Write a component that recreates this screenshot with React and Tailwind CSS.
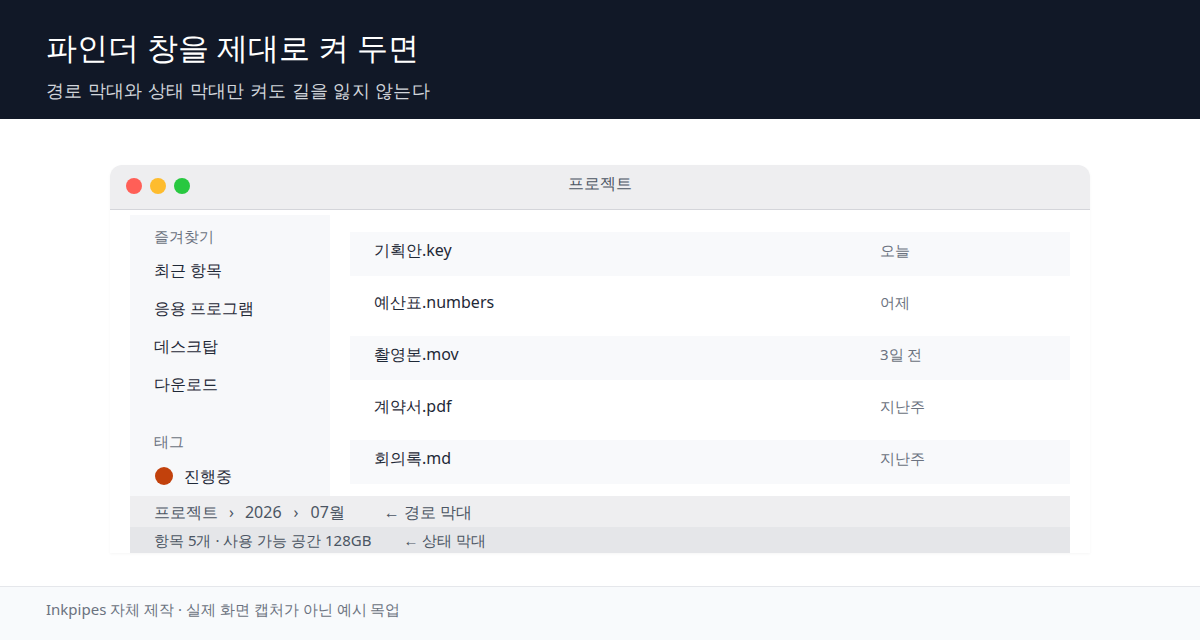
const FAVORITES = ['최근 항목', '응용 프로그램', '데스크탑', '다운로드']

const FILES = [
  { name: '기획안.key', date: '오늘' },
  { name: '예산표.numbers', date: '어제' },
  { name: '촬영본.mov', date: '3일 전' },
  { name: '계약서.pdf', date: '지난주' },
  { name: '회의록.md', date: '지난주' },
]

function Sidebar() {
  return (
    <div className="w-[200px] shrink-0 bg-[#f7f8fa] pt-[11px] pl-[24px]">
      <div className="text-[15px] leading-[20px] text-[#6b7280]">즐겨찾기</div>
      <div className="mt-[5px]">
        {FAVORITES.map(f => (
          <div key={f} className="h-[38px] flex items-center text-[16px] text-[#1f2937]">{f}</div>
        ))}
      </div>
      <div className="mt-[28px] text-[15px] leading-[20px] text-[#6b7280]">태그</div>
      <div className="mt-[6px] h-[38px] flex items-center text-[16px] text-[#1f2937]">
        <span className="w-[18px] h-[18px] ml-[1px] rounded-full bg-[#c2410c] shrink-0" />
        <span className="ml-[11px]">진행중</span>
      </div>
    </div>
  )
}

function FileList() {
  return (
    <div className="flex-1 pl-[20px] pt-[17px] flex flex-col gap-[8px]">
      {FILES.map((f, i) => (
        <div key={f.name} className={`h-[44px] pb-[8px] flex items-center ${i % 2 === 0 ? 'bg-[#f8f9fb]' : 'bg-white'}`}>
          <span className="w-[506px] ml-[24px] text-[16px] text-[#1f2937]">{f.name}</span>
          <span className="text-[15px] text-[#6b7280]">{f.date}</span>
        </div>
      ))}
    </div>
  )
}

export default function App() {
  return (
    <div className="w-[1200px] h-[640px] flex flex-col bg-white overflow-hidden font-['Noto_Sans',sans-serif]">
      <header className="h-[119px] shrink-0 bg-[#111827] px-[46px] pt-[27px]">
        <h1 className="text-[31px] leading-[40px] text-white">파인더 창을 제대로 켜 두면</h1>
        <p className="mt-[10px] text-[18px] leading-[26px] tracking-[0.02em] text-[#d1d5db]">경로 막대와 상태 막대만 켜도 길을 잃지 않는다</p>
      </header>

      <main className="flex-1 pt-[46px]">
        <div className="mx-[110px] w-[980px] bg-white rounded-t-[12px] shadow-[0_1px_3px_rgba(0,0,0,0.04)]">
          <div className="relative h-[45px] bg-[#eeeef0] rounded-t-[12px] border-b border-[#d4d5da] flex items-center">
            <div className="flex gap-[8px] pl-[16px] pb-[2px]">
              <span className="w-[16px] h-[16px] rounded-full bg-[#ff5f57]" />
              <span className="w-[16px] h-[16px] rounded-full bg-[#febc2e]" />
              <span className="w-[16px] h-[16px] rounded-full bg-[#28c840]" />
            </div>
            <div className="absolute inset-x-0 top-[7px] text-center text-[16px] leading-[22px] text-[#4b5563] pointer-events-none">프로젝트</div>
          </div>

          <div className="px-[20px] pt-[5px]">
            <div className="flex h-[281px]">
              <Sidebar />
              <FileList />
            </div>
            <div className="h-[31px] bg-[#eeeef0] flex items-center pl-[24px] text-[16px] text-[#4b5563]">
              <span>프로젝트</span>
              <span className="mx-[11px]">›</span>
              <span>2026</span>
              <span className="mx-[12px]">›</span>
              <span>07월</span>
              <span className="ml-[39px]">← 경로 막대</span>
            </div>
            <div className="h-[26px] bg-[#e5e6e9] flex items-center pl-[24px] text-[15px] text-[#4b5563]">
              <span>항목 5개 · 사용 가능 공간 128GB</span>
              <span className="ml-[32px]">← 상태 막대</span>
            </div>
          </div>
        </div>
      </main>

      <footer className="h-[54px] shrink-0 border-t border-[#e5e7eb] bg-[#f8fafc] px-[46px] pt-[12px]">
        <p className="text-[15px] leading-[20px] text-[#6b7280]">Inkpipes 자체 제작 · 실제 화면 캡처가 아닌 예시 목업</p>
      </footer>
    </div>
  )
}
